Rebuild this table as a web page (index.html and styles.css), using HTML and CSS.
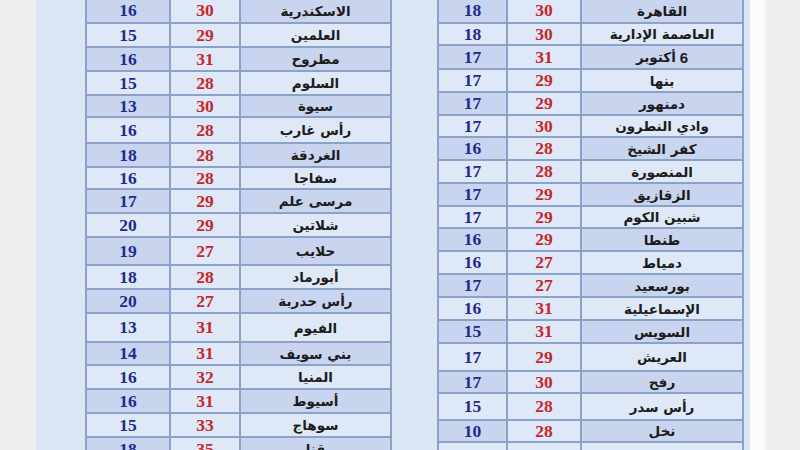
FILE: index.html
```html
<!DOCTYPE html>
<html lang="ar">
<head>
<meta charset="utf-8">
<link rel="stylesheet" href="styles.css">
</head>
<body>
<div class="page">
  <div class="panel">
    <div class="grid left">
      <div class="row dark"><span class="min">16</span><span class="max">30</span><span class="name">الاسكندرية</span></div>
      <div class="row"><span class="min">15</span><span class="max">29</span><span class="name">العلمين</span></div>
      <div class="row dark"><span class="min">16</span><span class="max">31</span><span class="name">مطروح</span></div>
      <div class="row"><span class="min">15</span><span class="max">28</span><span class="name">السلوم</span></div>
      <div class="row dark"><span class="min">13</span><span class="max">30</span><span class="name">سيوة</span></div>
      <div class="row"><span class="min">16</span><span class="max">28</span><span class="name">رأس غارب</span></div>
      <div class="row dark"><span class="min">18</span><span class="max">28</span><span class="name">الغردقة</span></div>
      <div class="row"><span class="min">16</span><span class="max">28</span><span class="name">سفاجا</span></div>
      <div class="row dark"><span class="min">17</span><span class="max">29</span><span class="name">مرسى علم</span></div>
      <div class="row"><span class="min">20</span><span class="max">29</span><span class="name">شلاتين</span></div>
      <div class="row dark"><span class="min">19</span><span class="max">27</span><span class="name">حلايب</span></div>
      <div class="row"><span class="min">18</span><span class="max">28</span><span class="name">أبورماد</span></div>
      <div class="row dark"><span class="min">20</span><span class="max">27</span><span class="name">رأس حدربة</span></div>
      <div class="row"><span class="min">13</span><span class="max">31</span><span class="name">الفيوم</span></div>
      <div class="row dark"><span class="min">14</span><span class="max">31</span><span class="name">بني سويف</span></div>
      <div class="row"><span class="min">16</span><span class="max">32</span><span class="name">المنيا</span></div>
      <div class="row dark"><span class="min">16</span><span class="max">31</span><span class="name">أسيوط</span></div>
      <div class="row"><span class="min">15</span><span class="max">33</span><span class="name">سوهاج</span></div>
      <div class="row dark"><span class="min">18</span><span class="max">35</span><span class="name">قنا</span></div>
    </div>
    <div class="grid right">
      <div class="row dark"><span class="min">18</span><span class="max">30</span><span class="name">القاهرة</span></div>
      <div class="row"><span class="min">18</span><span class="max">30</span><span class="name">العاصمة الإدارية</span></div>
      <div class="row dark"><span class="min">17</span><span class="max">31</span><span class="name"><b class="six">6</b> أكتوبر</span></div>
      <div class="row"><span class="min">17</span><span class="max">29</span><span class="name">بنها</span></div>
      <div class="row dark"><span class="min">17</span><span class="max">29</span><span class="name">دمنهور</span></div>
      <div class="row"><span class="min">17</span><span class="max">30</span><span class="name">وادي النطرون</span></div>
      <div class="row dark"><span class="min">16</span><span class="max">28</span><span class="name">كفر الشيخ</span></div>
      <div class="row"><span class="min">17</span><span class="max">28</span><span class="name">المنصورة</span></div>
      <div class="row dark"><span class="min">17</span><span class="max">29</span><span class="name">الزقازيق</span></div>
      <div class="row"><span class="min">17</span><span class="max">29</span><span class="name">شبين الكوم</span></div>
      <div class="row dark"><span class="min">16</span><span class="max">29</span><span class="name">طنطا</span></div>
      <div class="row"><span class="min">16</span><span class="max">27</span><span class="name">دمياط</span></div>
      <div class="row dark"><span class="min">17</span><span class="max">27</span><span class="name">بورسعيد</span></div>
      <div class="row"><span class="min">16</span><span class="max">31</span><span class="name">الإسماعيلية</span></div>
      <div class="row dark"><span class="min">15</span><span class="max">31</span><span class="name">السويس</span></div>
      <div class="row"><span class="min">17</span><span class="max">29</span><span class="name">العريش</span></div>
      <div class="row dark"><span class="min">17</span><span class="max">30</span><span class="name">رفح</span></div>
      <div class="row"><span class="min">15</span><span class="max">28</span><span class="name">رأس سدر</span></div>
      <div class="row dark"><span class="min">10</span><span class="max">28</span><span class="name">نخل</span></div>
      <div class="row"><span class="min"></span><span class="max"></span><span class="name"></span></div>
    </div>
  </div>
  <div class="edge"></div>
</div>
</body>
</html>
```
FILE: styles.css
```css
html, body {
  margin: 0;
  padding: 0;
}
body {
  background: #efefef;
  width: 800px;
  height: 450px;
  overflow: hidden;
}
.page {
  display: flex;
  height: 450px;
  padding-left: 36px;
}
.panel {
  width: 714px;
  background: #dce7f5;
  display: flex;
  align-items: flex-start;
  padding-left: 49px;
  gap: 45px;
  box-sizing: border-box;
}
.edge {
  width: 15px;
  background: #fbfbfb;
}
.grid {
  display: grid;
  margin-top: -3px;
  padding: 2px;
  gap: 2px;
  background: #8aa1c9;
  width: 307px;
  box-sizing: border-box;
}
.left {
  grid-template-columns: 82px 68px 149px;
  grid-template-rows: 23px 22px 22px 22px 20px 24px 22px 20px 22px 22px 26px 22px 22px 27px 21px 22px 22px 22px 22px;
}
.right {
  grid-template-columns: 67px 72px 160px;
  grid-template-rows: 23px 20px 22px 21px 21px 20px 21px 21px 21px 20px 21px 21px 21px 21px 21px 26px 20px 25px 20px 22px;
}
.row {
  display: contents;
}
.row > span {
  display: flex;
  align-items: center;
  justify-content: center;
  background: #dfe8f6;
  overflow: hidden;
}
.row.dark .min,
.row.dark .name {
  background: #c9d4ee;
}
.min, .max {
  font-family: "Liberation Serif", serif;
  font-weight: bold;
  font-size: 17.5px;
}
.min {
  color: #1d2b8e;
}
.max {
  color: #c6262c;
}
.name {
  font-family: "DejaVu Sans", sans-serif;
  font-weight: bold;
  font-size: 13.5px;
  color: #1c1c1c;
  direction: rtl;
}
.six {
  font-family: "Liberation Sans", sans-serif;
  font-size: 15px;
  margin-left: 4px;
}
```
